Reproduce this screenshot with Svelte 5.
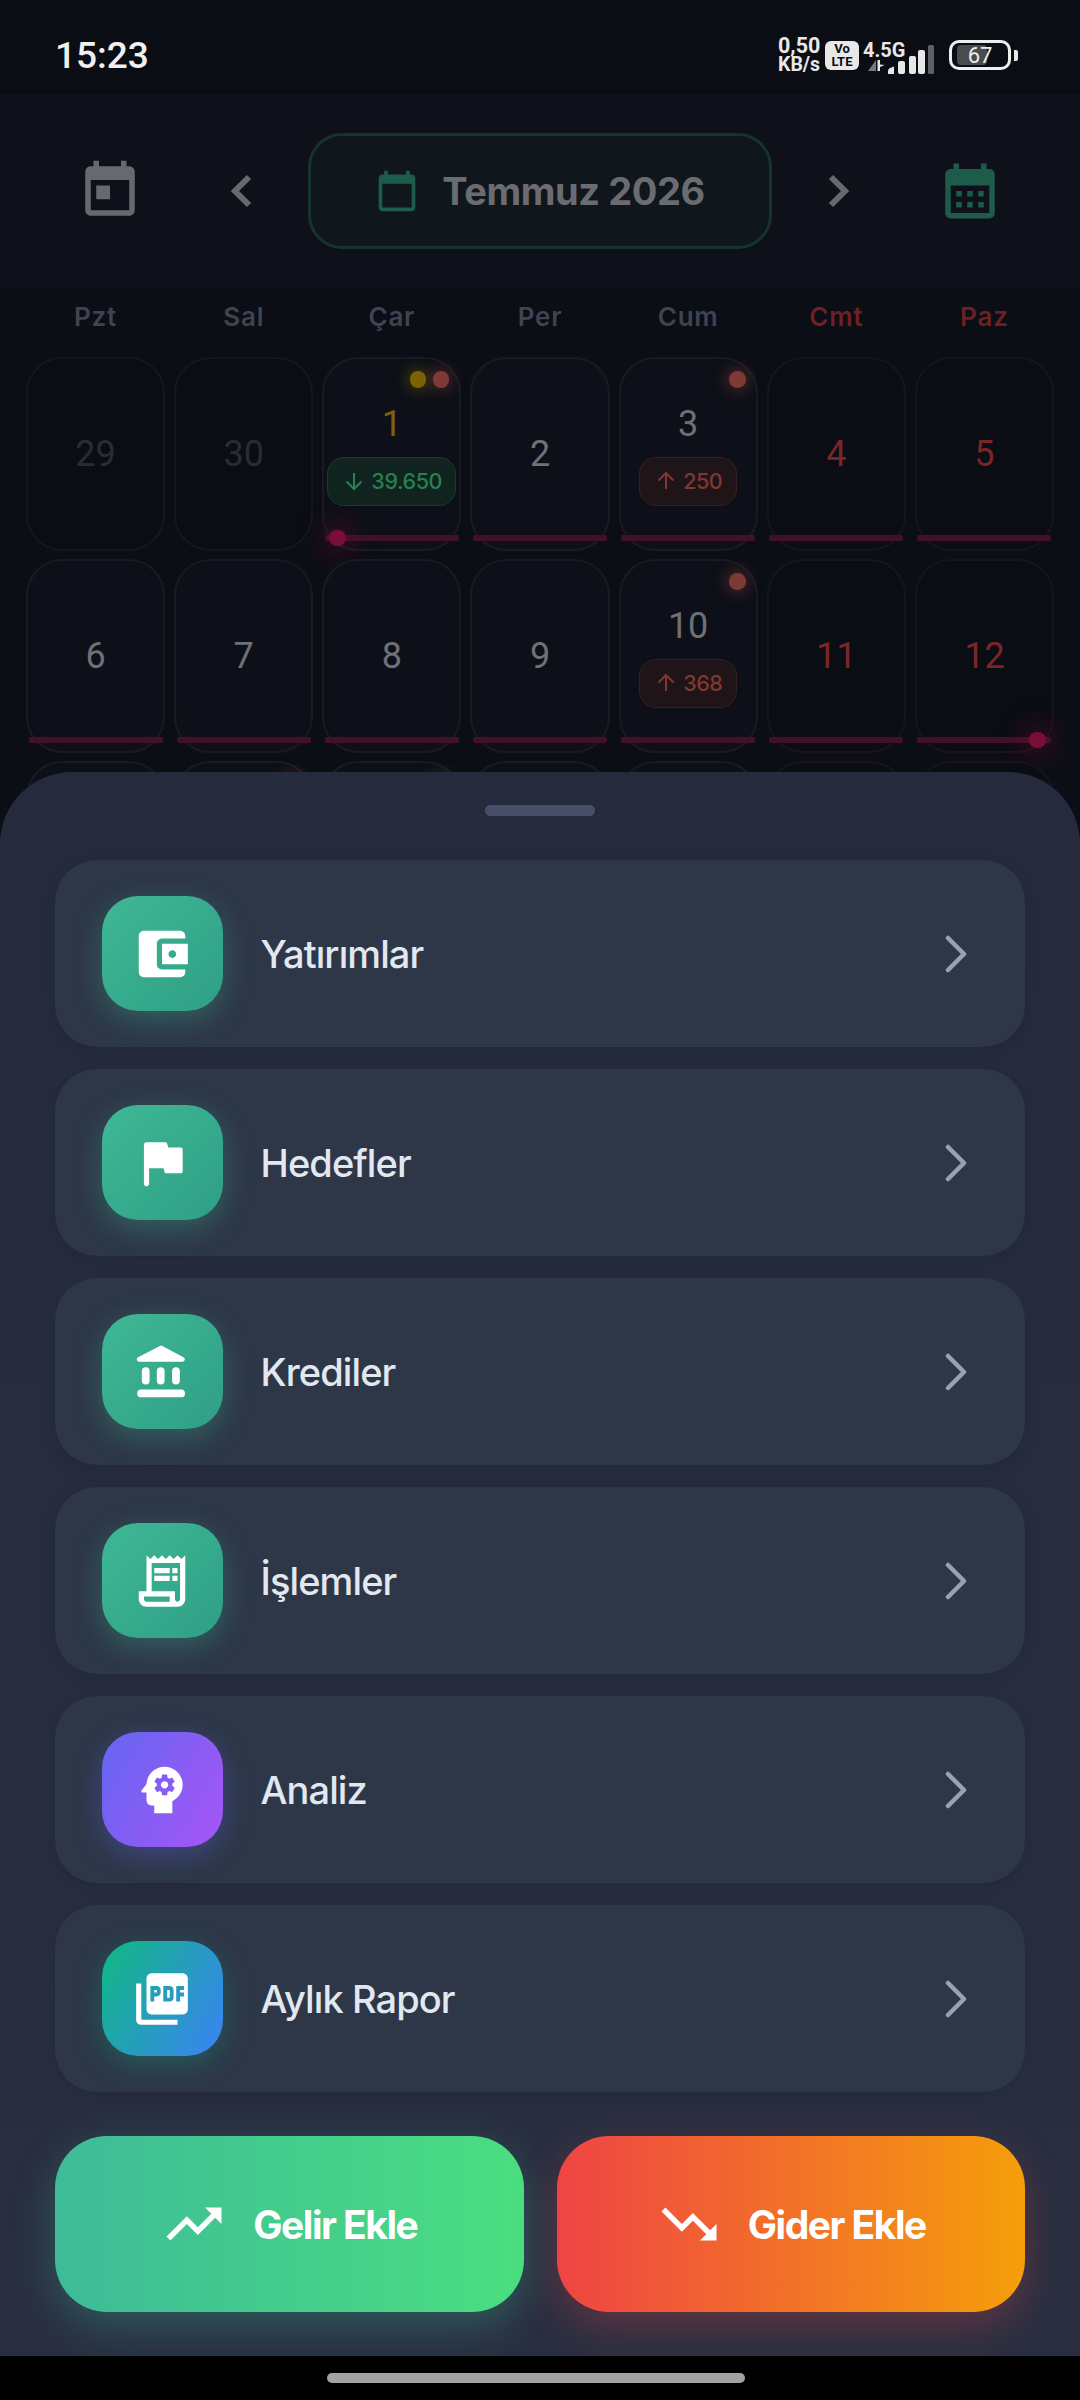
<script>
  const labels = [
    { t: 'Pzt' }, { t: 'Sal' }, { t: 'Çar' }, { t: 'Per' }, { t: 'Cum' }, { t: 'Cmt', we: true }, { t: 'Paz', we: true }
  ];
  const weeks = [
    [
      { n: '29', muted: true }, { n: '30', muted: true },
      { n: '1', today: true, dots: ['y', 'r'], badge: { dir: 'down', v: '39.650' }, line: true, start: true },
      { n: '2', line: true },
      { n: '3', dots: ['r'], badge: { dir: 'up', v: '250' }, line: true },
      { n: '4', we: true, line: true }, { n: '5', we: true, line: true }
    ],
    [
      { n: '6', line: true }, { n: '7', line: true }, { n: '8', line: true }, { n: '9', line: true },
      { n: '10', dots: ['r'], badge: { dir: 'up', v: '368' }, line: true },
      { n: '11', we: true, line: true }, { n: '12', we: true, line: true, end: true }
    ],
    [
      { n: '13' }, { n: '14', dots: ['r'] }, { n: '15', dots: ['g'] }, { n: '16' }, { n: '17' },
      { n: '18', we: true }, { n: '19', we: true }
    ]
  ];
  const items = [
    { label: 'Yatırımlar', icon: 'wallet', tone: 'green' },
    { label: 'Hedefler', icon: 'flag', tone: 'green' },
    { label: 'Krediler', icon: 'bank', tone: 'green' },
    { label: 'İşlemler', icon: 'receipt', tone: 'green' },
    { label: 'Analiz', icon: 'head', tone: 'purple' },
    { label: 'Aylık Rapor', icon: 'pdf', tone: 'teal' }
  ];
</script>

<div class="screen">
  <div class="status">
    <span class="time">15:23</span>
    <div class="sys">
      <div class="speed"><span>0,50</span><span>KB/s</span></div>
      <div class="volte"><span>Vo</span><span>LTE</span></div>
      <div class="net">
        <span class="g">4.5G</span>
        <svg class="arrows" width="17" height="11" viewBox="0 0 17 11">
          <path d="M8 0v11H0z" fill="#77797d" />
          <path d="M9.500 0h2.500v4.500L16.500 5 12 7v4H9.500z" fill="#e8e8e8" />
        </svg>
      </div>
      <svg class="bars" width="47" height="29" viewBox="0 0 47 29">
        <path d="M0 29v-3q0-2 2-3l4-1.500V29z" fill="#e8e8e8" />
        <rect x="10" y="16" width="7" height="13" rx="2" fill="#e8e8e8" />
        <rect x="21" y="11" width="7" height="18" rx="2" fill="#e8e8e8" />
        <rect x="30" y="5" width="7" height="24" rx="2" fill="#e8e8e8" />
        <rect x="40" y="0" width="6" height="29" rx="1.500" fill="#5e6065" />
      </svg>
      <div class="battery">
        <div class="cell-b"><span class="fill"></span><span class="pct">67</span></div>
        <span class="nub"></span>
      </div>
    </div>
  </div>

  <header class="head">
    <svg class="hicon grey" viewBox="0 0 24 24"><path d="M19 3h-1V1h-2v2H8V1H6v2H5c-1.110 0-1.990.9-1.990 2L3 19c0 1.100.89 2 2 2h14c1.100 0 2-.9 2-2V5c0-1.100-.9-2-2-2zm0 16H5V8h14v11zM7 10h5v5H7z" /></svg>
    <svg class="chev prev" viewBox="0 0 24 36"><path d="M20 4 6 18l14 14" /></svg>
    <div class="pill">
      <svg class="picon" viewBox="0 0 24 24"><path d="M20 3h-1V1h-2v2H7V1H5v2H4c-1.100 0-2 .9-2 2v16c0 1.100.9 2 2 2h16c1.100 0 2-.9 2-2V5c0-1.100-.9-2-2-2zm0 18H4V8h16v13z" /></svg>
      <span>Temmuz 2026</span>
    </div>
    <svg class="chev next" viewBox="0 0 24 36"><path d="M4 4l14 14L4 32" /></svg>
    <svg class="hicon teal" viewBox="0 0 24 24"><path d="M19 4h-1V2h-2v2H8V2H6v2H5C3.890 4 3.010 4.900 3.010 6L3 20c0 1.100.89 2 2 2h14c1.100 0 2-.9 2-2V6c0-1.100-.9-2-2-2zm0 16H5V10h14v10zM9 14H7v-2h2v2zm4 0h-2v-2h2v2zm4 0h-2v-2h2v2zm-8 4H7v-2h2v2zm4 0h-2v-2h2v2zm4 0h-2v-2h2v2z" /></svg>
  </header>

  <div class="labels">
    {#each labels as l}
      <span class:we={l.we}>{l.t}</span>
    {/each}
  </div>

  <div class="grid">
    {#each weeks as week}
      {#each week as d}
        <div class="day" class:wknd={d.we} class:old={d.muted}>
          {#if d.dots}
            <div class="dots">
              {#each d.dots as c}<i class={'dot ' + c}></i>{/each}
            </div>
          {/if}
          <span class="num" class:gold={d.today}>{d.n}</span>
          {#if d.badge}
            <span class={'badge ' + d.badge.dir}>
              <svg viewBox="0 0 18 20" width="18" height="20">
                {#if d.badge.dir === 'down'}
                  <path d="M9 2v16M1.500 10.500 9 18l7.500-7.500" />
                {:else}
                  <path d="M9 18V2M1.500 9.500 9 2l7.500 7.500" />
                {/if}
              </svg>
              {d.badge.v}
            </span>
          {/if}
          {#if d.line}<span class="line"></span>{/if}
          {#if d.start}<i class="pin left"></i>{/if}
          {#if d.end}<i class="pin right"></i>{/if}
        </div>
      {/each}
    {/each}
  </div>

  <section class="sheet">
    <div class="handle"></div>
    <div class="list">
      {#each items as it}
        <div class="item">
          <div class={'tile ' + it.tone}>
            <svg viewBox="0 0 24 24" width="62" height="62" fill="#fff">
              {#if it.icon === 'wallet'}
                <path d="M21 18v1c0 1.100-.9 2-2 2H5c-1.110 0-2-.9-2-2V5c0-1.100.89-2 2-2h14c1.100 0 2 .9 2 2v1h-9c-1.110 0-2 .9-2 2v8c0 1.100.89 2 2 2h9zm-9-2h10V8H12v8zm4-2.500c-.83 0-1.500-.67-1.500-1.500s.67-1.500 1.500-1.500 1.500.67 1.500 1.500-.67 1.500-1.500 1.500z" />
              {:else if it.icon === 'flag'}
                <path d="M6 4h7.300c.35 0 .64.24.7.58L14.400 6H19.300c.4 0 .7.300.7.7v8.600c0 .4-.3.7-.7.7H13.600c-.33 0-.62-.24-.68-.57L12.600 14H7v6c0 .55-.45 1-1 1s-1-.45-1-1V5c0-.55.45-1 1-1z" />
              {:else if it.icon === 'bank'}
                <path d="M11 2c.4-.2.9-.2 1.300 0l8 4.300c.9.5.55 1.700-.45 1.700H3.200c-1 0-1.350-1.200-.45-1.700z" />
                <rect x="4.200" y="10.200" width="3" height="6.600" rx="1.500" />
                <rect x="10" y="10.200" width="3" height="6.600" rx="1.500" />
                <rect x="15.900" y="10.200" width="3" height="6.600" rx="1.500" />
                <rect x="2.400" y="18.800" width="18.500" height="3" rx="1.500" />
              {:else if it.icon === 'receipt'}
                <path d="M19.500 3.500 18 2l-1.500 1.500L15 2l-1.500 1.500L12 2l-1.500 1.500L9 2 7.500 3.500 6 2v14H3v3c0 1.660 1.340 3 3 3h12c1.660 0 3-1.340 3-3V2l-1.500 1.500zM15 20H6c-.55 0-1-.45-1-1v-1h10v2zm4-1c0 .55-.45 1-1 1s-1-.45-1-1v-3H8V5h11v14z" />
                <path d="M9 7h6v2H9zM16 7h2v2h-2zM9 10h6v2H9zM16 10h2v2h-2z" />
              {:else if it.icon === 'head'}
                <path d="M13 8.570c-.79 0-1.430.64-1.430 1.430s.64 1.430 1.430 1.430 1.430-.64 1.430-1.430-.64-1.430-1.430-1.430z" />
                <path d="M13 3C9.250 3 6.200 5.940 6.020 9.640L4.100 12.200c-.25.33 0 .8.4.8H6v3c0 1.100.9 2 2 2h1v3h7v-4.680c2.360-1.120 4-3.530 4-6.320 0-3.870-3.130-7-7-7zm3 7c0 .13-.01.26-.02.39l.83.66c.08.06.1.16.05.25l-.8 1.390c-.05.09-.16.12-.24.09l-.99-.4c-.21.16-.43.29-.67.39L14 13.830c-.01.1-.1.17-.2.17h-1.600c-.1 0-.18-.07-.2-.17l-.15-1.060c-.25-.1-.47-.23-.68-.39l-.99.4c-.09.03-.2 0-.25-.09l-.8-1.390c-.05-.08-.03-.19.05-.25l.84-.66c-.01-.13-.02-.26-.02-.39s.02-.27.04-.39l-.85-.66c-.08-.06-.1-.16-.05-.26l.8-1.380c.05-.09.15-.12.24-.09l1 .4c.2-.15.43-.29.67-.39L12 6.170c.02-.1.1-.17.2-.17h1.600c.1 0 .18.07.2.17l.15 1.060c.24.1.46.23.67.39l1-.4c.09-.03.2 0 .24.09l.8 1.380c.05.09.03.2-.05.26l-.85.66c.03.12.04.25.04.39z" />
              {:else}
                <path d="M20 2H8c-1.100 0-2 .9-2 2v12c0 1.100.9 2 2 2h12c1.100 0 2-.9 2-2V4c0-1.100-.9-2-2-2zm-8.500 7.500c0 .83-.67 1.500-1.500 1.500H9v2H7.500V7H10c.83 0 1.500.67 1.500 1.500v1zm5 2c0 .83-.67 1.500-1.500 1.500h-2.500V7H15c.83 0 1.500.67 1.500 1.500v3zm4-3H19v1h1.500V11H19v2h-1.500V7h3v1.500zM9 9.500h1v-1H9v1zM4 6H2v14c0 1.100.9 2 2 2h14v-2H4V6zm10 5.500h1v-3h-1v3z" />
              {/if}
            </svg>
          </div>
          <span class="name">{it.label}</span>
          <svg class="go" viewBox="0 0 24 38" width="24" height="38"><path d="M3 3l16 16L3 35" /></svg>
        </div>
      {/each}
    </div>
    <div class="actions">
      <button class="act in">
        <svg viewBox="0 0 24 24" width="66" height="66" fill="#fff"><path d="M16 6l2.290 2.290-4.880 4.880-4-4L2 16.590 3.410 18l6-6 4 4 6.300-6.290L22 12V6z" /></svg>
        Gelir Ekle
      </button>
      <button class="act out">
        <svg viewBox="0 0 24 24" width="66" height="66" fill="#fff"><path d="M16 18l2.290-2.290-4.880-4.880-4 4L2 7.410 3.410 6l6 6 4-4 6.300 6.290L22 12v6z" /></svg>
        Gider Ekle
      </button>
    </div>
  </section>

  <div class="nav"><span></span></div>
</div>

<style>
  :global(body) { margin: 0; background: #000; }
  .screen {
    position: relative; width: 1080px; height: 2400px; overflow: hidden;
    background: #0b0e15; font-family: Inter, "Noto Sans", sans-serif;
  }
  .status {
    height: 94px; box-sizing: border-box; padding: 16px 62px 0 55px;
    display: flex; align-items: center; justify-content: space-between;
    background: #0a0d14;
  }
  .time { font: 500 37px Roboto, sans-serif; color: #f0f0f0; }
  .sys { display: flex; align-items: center; color: #e8e8e8; font-family: Roboto, sans-serif; }
  .speed { display: flex; flex-direction: column; width: 41px; font-weight: 700; line-height: 19px; text-align: center; }
  .speed span:first-child { font-size: 21.500px; }
  .speed span:last-child { font-size: 19.500px; white-space: nowrap; }
  .volte {
    width: 34px; height: 29px; margin-left: 6px; background: #e8e8e8; color: #0a0d14; border-radius: 6px;
    display: flex; flex-direction: column; align-items: center; justify-content: center;
    font-weight: 700; font-size: 13px; line-height: 13px;
  }
  .net { display: flex; flex-direction: column; margin-left: 4px; width: 43px; }
  .net .g { font-weight: 700; font-size: 20px; line-height: 20px; }
  .arrows { margin: 0 0 0 5px; }
  .bars { margin: 0 0 0 -18px; align-self: flex-end; }
  .battery { display: flex; align-items: center; margin-left: 14px; }
  .cell-b {
    position: relative; width: 62px; height: 30px; box-sizing: border-box; border: 3px solid #eee; border-radius: 10px;
    display: flex; align-items: center; justify-content: center;
  }
  .fill { position: absolute; left: 5px; top: 2px; bottom: 2px; width: 30px; background: #4a4b50; border-radius: 4px; }
  .pct { position: relative; font-size: 22px; color: #eee; font-weight: 400; }
  .nub { width: 4px; height: 11px; background: #e8e8e8; border-radius: 0 2px 2px 0; margin-left: 3px; }

  .head {
    height: 193px; box-sizing: border-box; display: flex; align-items: center;
    padding: 0 77px; background: #0e1119;
  }
  .hicon { width: 66px; height: 66px; }
  .hicon.grey { fill: #68696f; }
  .hicon.teal { fill: #1d5c4a; }
  .chev { width: 24px; height: 36px; fill: none; stroke: #68696f; stroke-width: 6; }
  .chev.prev { margin: 0 55px 0 86px; }
  .chev.next { margin: 0 86px 0 55px; }
  .pill {
    width: 464px; height: 116px; box-sizing: border-box;
    border: 3px solid #16332e; border-radius: 34px; background: #10171c;
    display: flex; align-items: center; justify-content: center; gap: 23px;
    color: #6b6c72; font-size: 38px; font-weight: 700; letter-spacing: -.4px;
  }
  .picon { width: 44px; height: 44px; fill: #1d5c4a; }

  .labels {
    display: grid; grid-template-columns: repeat(7, minmax(0, 1fr)); gap: 9px; padding: 0 26px 12px; height: 70px; box-sizing: border-box;
    align-items: center; text-align: center; font-size: 26px; font-weight: 600; color: #3f4452; letter-spacing: .8px;
  }
  .labels .we { color: #6e2024; }

  .grid { display: grid; grid-template-columns: repeat(7, minmax(0, 1fr)); grid-auto-rows: 194px; gap: 8px 9px; padding: 0 26px; }
  .day {
    position: relative; box-sizing: border-box; border: 2.500px solid #181b23; border-radius: 36px;
    background: #0d1018; display: flex; flex-direction: column; align-items: center; justify-content: center;
    color: #6f7177;
  }
  .day.old { background: #0a0d14; border-color: #15171e; }
  .day.wknd { background: #0a0d14; border-color: #1c1318; }
  .num { font: 400 36px/42px Roboto, sans-serif; color: #6f7177; }
  .old .num { color: #2a2c32; }
  .wknd .num { color: #7c2526; }
  .num.gold { color: #7a6209; }
  .dots { position: absolute; top: 12px; right: 10px; display: flex; gap: 6.500px; }
  .dot { display: block; width: 16.500px; height: 16.500px; border-radius: 50%; }
  .dot.y { background: #7c6400; box-shadow: 0 0 14px 3px rgba(124, 100, 0, .45); }
  .dot.r { background: #803a36; box-shadow: 0 0 14px 3px rgba(128, 58, 54, .5); }
  .dot.g { background: #155c3a; box-shadow: 0 0 14px 3px rgba(21, 92, 58, .5); }
  .badge {
    box-sizing: border-box; height: 49px; margin-top: 12px; padding: 0 0 0 17px;
    display: flex; align-items: center; gap: 8px;
    border-radius: 17px; font-size: 21.500px; font-weight: 500; letter-spacing: -.4px; border: 1.500px solid;
  }
  .badge.down { width: 129px; color: #27804f; background: #10231f; border-color: #183c2c; }
  .badge.up { width: 98px; color: #81372f; background: #1f1418; border-color: #37201f; }
  .badge svg { flex: none; fill: none; stroke: currentColor; stroke-width: 2; }
  .line { position: absolute; left: 0; right: 0; bottom: 8.500px; height: 5.500px; margin: 0 .5px; background: #43102a; border-radius: 2px; }
  .pin { position: absolute; bottom: 3px; width: 16.500px; height: 16.500px; border-radius: 50%; background: #7c0d36; box-shadow: 0 0 24px 9px rgba(124, 13, 54, .34); }
  .pin.left { left: 5px; }
  .pin.right { right: 6px; }

  .sheet {
    position: absolute; left: 0; right: 0; top: 772px; height: 1584px; box-sizing: border-box;
    padding: 33px 55px 44px; border-radius: 72px 72px 0 0;
    background: linear-gradient(180deg, #252b3c, #292f41);
  }
  .handle { width: 110px; height: 11px; margin: 0 auto; border-radius: 6px; background: #475068; }
  .list { display: flex; flex-direction: column; gap: 22px; margin-top: 44px; }
  .item {
    height: 187px; box-sizing: border-box; display: flex; align-items: center; padding: 0 56px 0 47px;
    border-radius: 42px; background: #2d3748; box-shadow: 0 4px 16px rgba(0, 0, 0, .12);
  }
  .tile { width: 120.500px; height: 115px; border-radius: 36px; display: flex; align-items: center; justify-content: center; }
  .tile.green { background: linear-gradient(135deg, #3fb895, #2f9f85); box-shadow: 0 8px 28px rgba(63, 184, 149, .33); }
  .tile.purple { background: linear-gradient(120deg, #6366f1, #a855f7); box-shadow: 0 8px 28px rgba(99, 102, 241, .33); }
  .tile.teal { background: linear-gradient(120deg, #10b981, #3b82f6); box-shadow: 0 8px 28px rgba(16, 185, 129, .28); }
  .name { margin-left: 38px; flex: 1; font-size: 38px; font-weight: 500; letter-spacing: -.9px; color: #e2e8f0; }
  .go { fill: none; stroke: #94a3b8; stroke-width: 4.500; stroke-linecap: round; stroke-linejoin: round; }

  .actions { display: flex; gap: 33px; margin-top: 44px; }
  .act {
    flex: 1; height: 176px; border: 0; border-radius: 52px; display: flex; align-items: center; justify-content: center;
    gap: 26px; padding: 0; color: #fff; font-family: Inter, sans-serif; font-size: 39px; font-weight: 700; letter-spacing: -1.500px;
  }
  .act.in { background: linear-gradient(90deg, #3ebb98, #4ade80); box-shadow: 0 14px 40px rgba(62, 187, 152, .3); }
  .act.out { background: linear-gradient(90deg, #ef4444, #f59e0b); box-shadow: 0 14px 40px rgba(239, 68, 68, .28); }
  .nav { position: absolute; left: 0; right: 0; bottom: 0; height: 44px; background: #000; }
  .nav span { position: absolute; left: 327px; top: 17px; width: 418px; height: 10px; border-radius: 5px; background: #a2a2a2; }
</style>
